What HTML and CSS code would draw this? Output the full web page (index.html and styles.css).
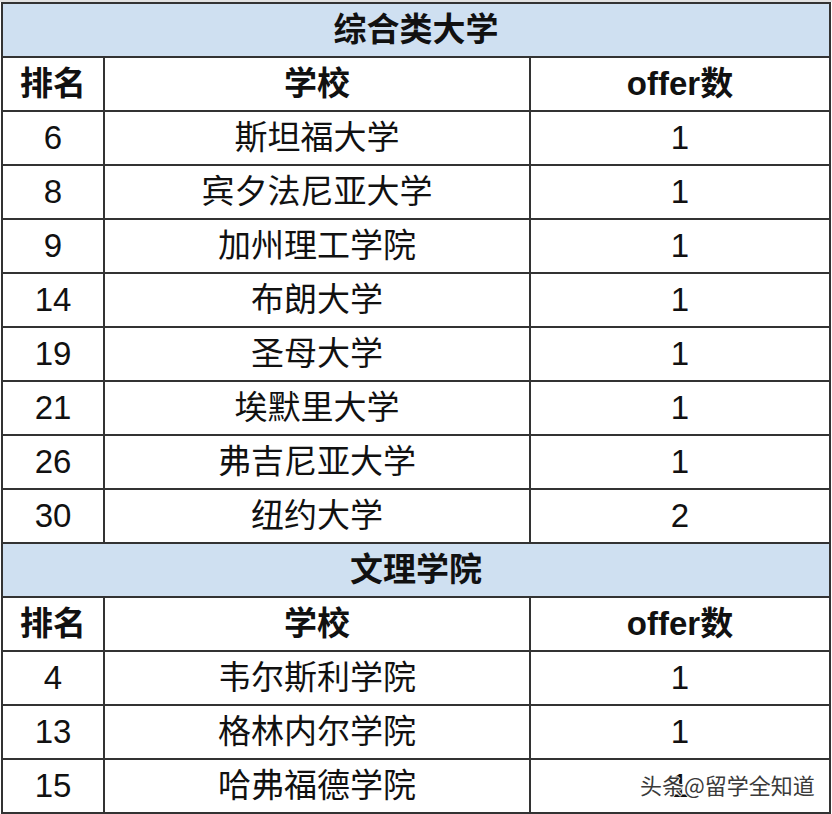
FILE: index.html
```html
<!DOCTYPE html>
<html lang="zh-CN">
<head>
<meta charset="utf-8">
<title>offer</title>
<link rel="stylesheet" href="styles.css">
</head>
<body>
<div class="page">
  <div class="strip"></div>
  <div class="sheet">
    <div class="cell title">综合类大学</div>
    <div class="cell head">排名</div><div class="cell head">学校</div><div class="cell head">offer数</div>
    <div class="cell">6</div><div class="cell">斯坦福大学</div><div class="cell">1</div>
    <div class="cell">8</div><div class="cell">宾夕法尼亚大学</div><div class="cell">1</div>
    <div class="cell">9</div><div class="cell">加州理工学院</div><div class="cell">1</div>
    <div class="cell">14</div><div class="cell">布朗大学</div><div class="cell">1</div>
    <div class="cell">19</div><div class="cell">圣母大学</div><div class="cell">1</div>
    <div class="cell">21</div><div class="cell">埃默里大学</div><div class="cell">1</div>
    <div class="cell">26</div><div class="cell">弗吉尼亚大学</div><div class="cell">1</div>
    <div class="cell">30</div><div class="cell">纽约大学</div><div class="cell">2</div>
    <div class="cell title">文理学院</div>
    <div class="cell head">排名</div><div class="cell head">学校</div><div class="cell head">offer数</div>
    <div class="cell">4</div><div class="cell">韦尔斯利学院</div><div class="cell">1</div>
    <div class="cell">13</div><div class="cell">格林内尔学院</div><div class="cell">1</div>
    <div class="cell">15</div><div class="cell">哈弗福德学院</div><div class="cell">1</div>
  </div>
  <div class="watermark">头条@留学全知道</div>
</div>
</body>
</html>
```
FILE: styles.css
```css
html, body {
  margin: 0;
  padding: 0;
  background: #ffffff;
}
.page {
  position: relative;
  width: 832px;
  height: 814px;
  overflow: hidden;
  font-family: "Liberation Sans", "Noto Sans CJK SC", sans-serif;
  color: #111;
}
.strip {
  height: 2px;
  background: #e2e2e2;
}
.sheet {
  margin-left: 1px;
  width: 826px;
  display: grid;
  grid-template-columns: 100px 424px 298px;
  grid-auto-rows: 52px;
  gap: 2px;
  padding: 2px;
  background: #333;
}
.cell {
  background: #fff;
  display: flex;
  align-items: center;
  justify-content: center;
  font-size: 33px;
  line-height: 1;
  padding-bottom: 2px;
  box-sizing: border-box;
}
.title {
  grid-column: 1 / -1;
  background: #cfe0f1;
  font-weight: 700;
}
.head {
  font-weight: 700;
}
.watermark {
  position: absolute;
  left: 640px;
  top: 771px;
  font-family: "Noto Sans CJK SC", sans-serif;
  font-size: 22px;
  line-height: 26px;
  color: #3a3a3a;
  text-shadow: 1px 0 0 #fff, -1px 0 0 #fff, 0 1px 0 #fff, 0 -1px 0 #fff;
}
```
